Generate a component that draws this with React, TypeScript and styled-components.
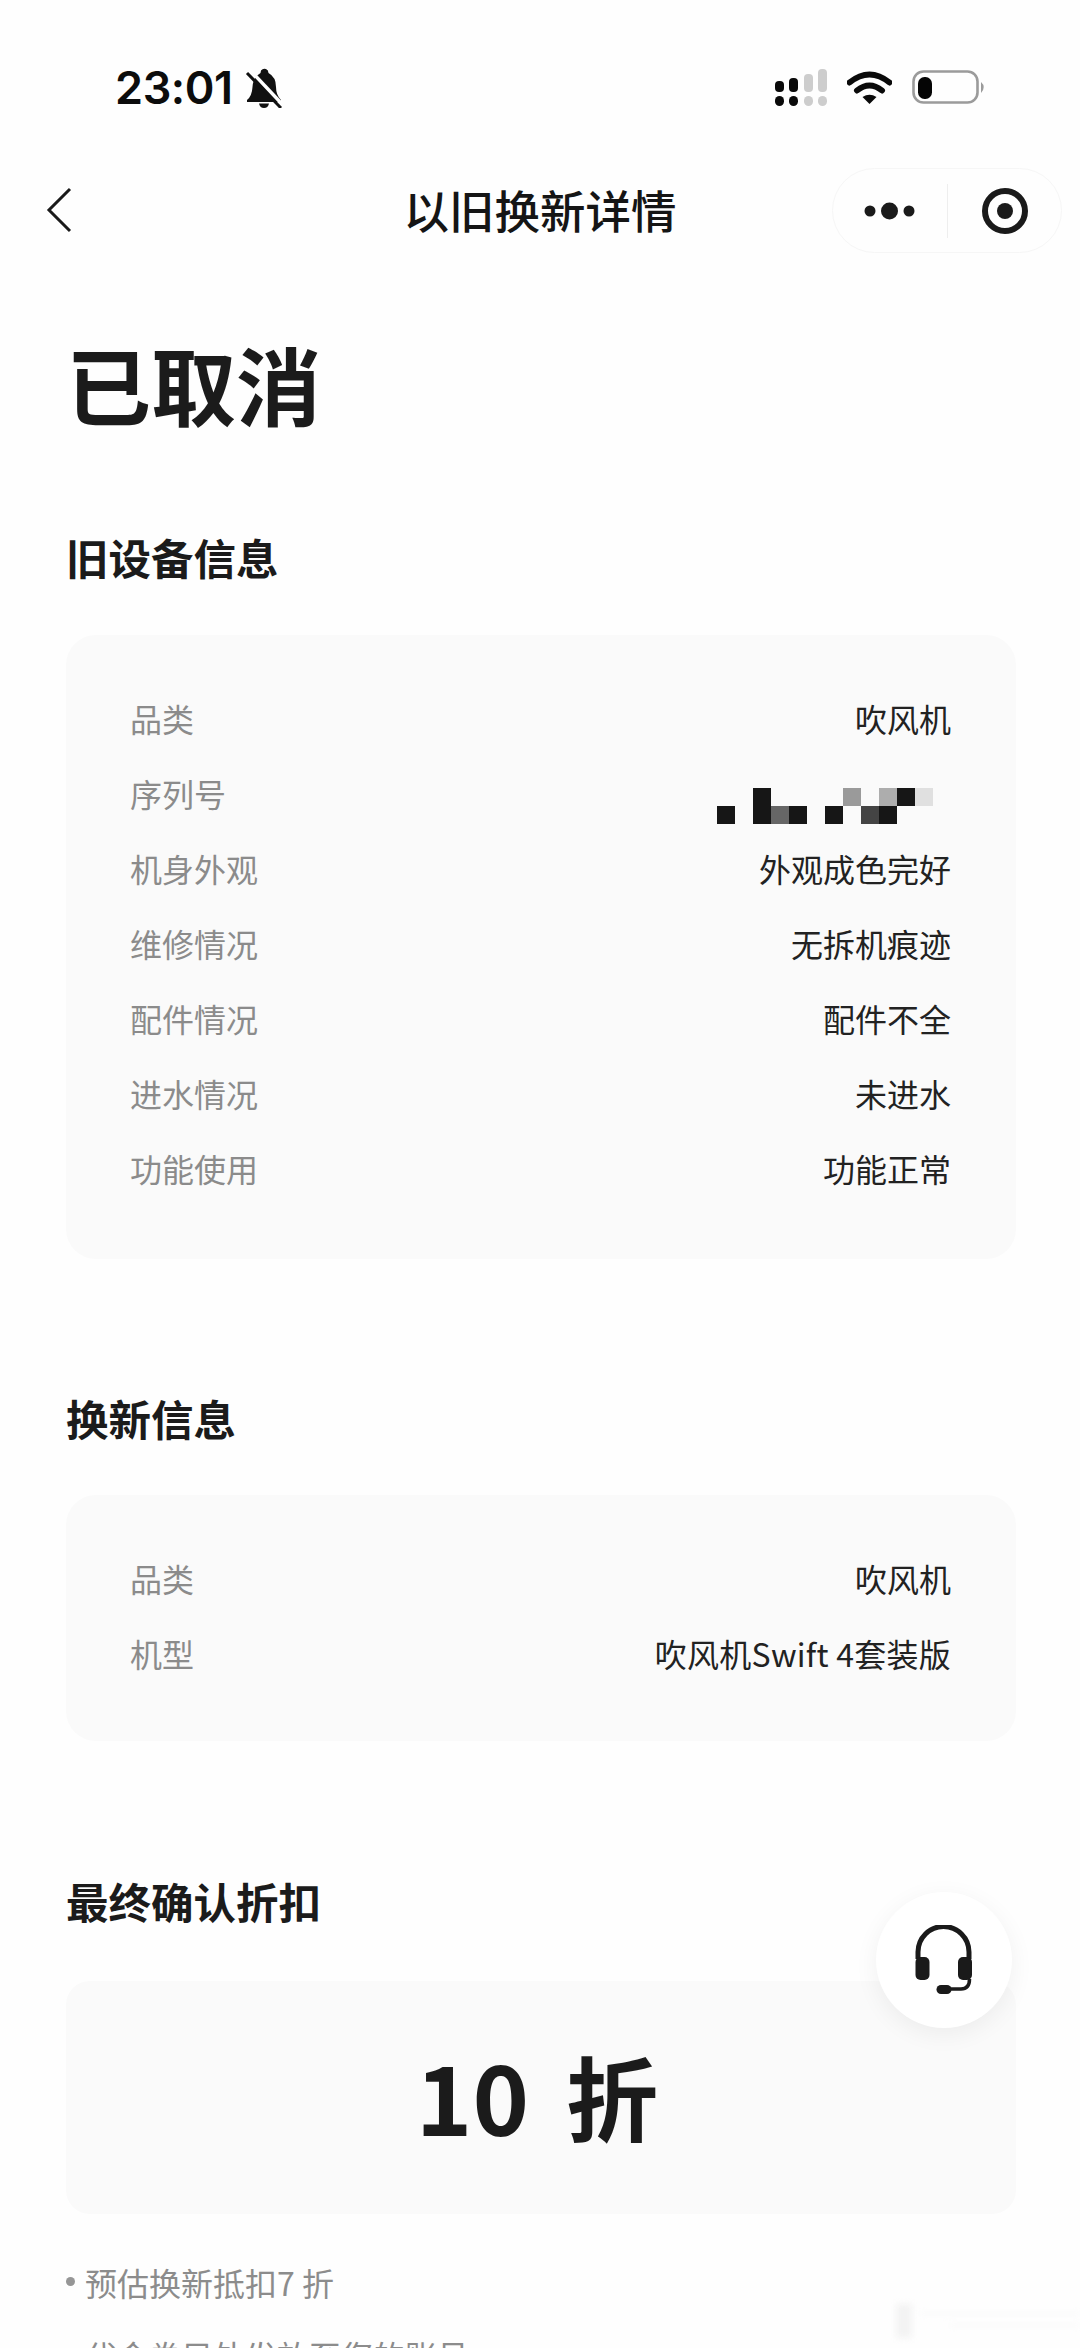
import React from "react";
import styled, { createGlobalStyle } from "styled-components";

const Global = createGlobalStyle`
  html, body { margin: 0; padding: 0; background: #fff; }
  body { font-family: "Noto Sans CJK SC", "Noto Sans", sans-serif; color: #1c1c1c; }
`;

const Page = styled.div`
  position: relative;
  width: 1080px;
  height: 2348px;
  overflow: hidden;
  background: #fefefe;
`;

const StatusBar = styled.div`
  height: 168px;
  box-sizing: border-box;
  padding: 68px 93px 0 115px;
  display: flex;
  align-items: flex-start;
  justify-content: space-between;
`;

const StatusLeft = styled.div`
  display: flex;
  align-items: center;
  gap: 12px;
  height: 40px;
`;

const Time = styled.span`
  font-family: Inter, "Liberation Sans", sans-serif;
  font-weight: 600;
  font-size: 45px;
  line-height: 40px;
  letter-spacing: -0.4px;
  color: #0c0c0c;
`;

const StatusRight = styled.div`
  display: flex;
  align-items: center;
  gap: 20px;
  height: 38px;
`;

const NavBar = styled.div`
  height: 85px;
  position: relative;
  display: flex;
  align-items: center;
  justify-content: center;
`;

const NavTitle = styled.h1`
  margin: 0;
  padding-bottom: 3px;
  font-size: 45.5px;
  font-weight: 500;
  line-height: 60px;
  color: #151515;
`;

const BackIcon = styled.svg`
  position: absolute;
  left: 46px;
  top: 19px;
`;

const Capsule = styled.div`
  position: absolute;
  right: 18px;
  top: 0;
  width: 230px;
  height: 85px;
  box-sizing: border-box;
  border: 1.5px solid #f6f6f6;
  border-radius: 43px;
  display: flex;
  align-items: center;
`;

const CapsuleSide = styled.div<{ $w: number }>`
  width: ${(p) => p.$w}px;
  height: 54px;
  display: flex;
  align-items: center;
  justify-content: center;
`;

const CapsuleLeft = styled(CapsuleSide)`
  border-right: 1.5px solid #eeeeee;
  box-sizing: border-box;
`;

const Content = styled.main`
  padding: 87px 64px 0 66px;
`;

const StateTitle = styled.div`
  font-size: 85px;
  font-weight: 700;
  line-height: 86px;
  color: #1b1b1b;
`;

const SectionTitle = styled.h2<{ $top: number }>`
  margin: ${(p) => p.$top}px 0 0;
  font-size: 42.5px;
  font-weight: 700;
  line-height: 60px;
  color: #1b1b1b;
`;

const Card = styled.section<{ $gap: number; $bottom: number }>`
  margin-top: ${(p) => p.$gap}px;
  padding: 45px 65px ${(p) => p.$bottom}px 64px;
  background: #fafafa;
  border-radius: 30px;
`;

const Row = styled.div`
  height: 75px;
  display: flex;
  align-items: center;
  justify-content: space-between;
  font-size: 32px;
  line-height: 44px;
`;

const Label = styled.span`
  color: #8b8b8b;
`;

const Value = styled.span<{ $spacing?: number }>`
  color: #222;
  letter-spacing: ${(p) => p.$spacing ?? 0}px;
`;

const Mosaic = styled.div`
  display: grid;
  grid-template-columns: repeat(12, 18px);
  grid-auto-rows: 18px;
  margin: 26px 18px 0 0;
`;

const MosaicCell = styled.i<{ $c: string }>`
  display: block;
  background: ${(p) => p.$c};
`;

const DiscountCard = styled.section`
  margin-top: 50px;
  height: 233px;
  box-sizing: border-box;
  padding: 0 8px 6px 0;
  background: #fafafa;
  border-radius: 24px;
  display: flex;
  align-items: center;
  justify-content: center;
  gap: 37px;
  font-weight: 700;
  line-height: 120px;
  color: #1b1b1b;
`;

const DiscountPart = styled.span<{ $size: number }>`
  font-size: ${(p) => p.$size}px;
`;

const Notes = styled.ul`
  list-style: none;
  margin: 31px 0 0;
  padding: 0;
`;

const Note = styled.li`
  display: flex;
  align-items: center;
  height: 73px;
  font-size: 32px;
  color: #8c8c8c;
  white-space: nowrap;
`;

const NoteDot = styled.i`
  width: 9px;
  height: 9px;
  border-radius: 50%;
  margin-right: 10px;
  background: #969696;
`;

const FloatButton = styled.div`
  position: absolute;
  left: 876px;
  top: 1892px;
  width: 136px;
  height: 136px;
  border-radius: 50%;
  background: #fff;
  box-shadow: 0 6px 24px rgba(0, 0, 0, 0.06);
  display: flex;
  align-items: center;
  justify-content: center;
`;

const Watermark = styled.div`
  position: absolute;
  left: 890px;
  top: 2300px;
  width: 190px;
  height: 42px;
  filter: blur(3px);
  background:
    linear-gradient(#f3f3f3, #f3f3f3) 6px 4px / 16px 34px no-repeat,
    linear-gradient(#fafafa, #fafafa) 30px 12px / 160px 3px no-repeat,
    linear-gradient(#fafafa, #fafafa) 60px 24px / 130px 3px no-repeat;
`;

const K = "#161616";
const mosaicCells = [
  ["transparent", "transparent", K, "transparent", "transparent", "transparent", "transparent", "#9a9a9a", "transparent", "#adadad", K, "#e0e0e0"],
  [K, "transparent", K, "#666666", K, "transparent", K, "transparent", "#444444", K, "transparent", "transparent"],
];

const SignalIcon = () => (
  <svg width="52" height="37" viewBox="0 0 52 37">
    <g fill="#0a0a0a">
      <rect x="0" y="12" width="9" height="11" rx="4" />
      <rect x="14" y="9" width="9" height="14" rx="4" />
      <rect x="0" y="27" width="9" height="10" rx="4.5" />
      <rect x="14" y="27" width="9" height="10" rx="4.5" />
    </g>
    <g fill="#cdcdcd">
      <rect x="29" y="5" width="9" height="18" rx="4" />
      <rect x="43" y="0" width="9" height="23" rx="4" />
      <rect x="29" y="27" width="9" height="10" rx="4.5" />
      <rect x="43" y="27" width="9" height="10" rx="4.5" />
    </g>
  </svg>
);

const WifiIcon = () => (
  <svg width="45" height="34" viewBox="0 0 45 34">
    <path d="M2.5 12.5 Q22.5 -3.5 42.5 12.5" fill="none" stroke="#0a0a0a" strokeWidth="6" strokeLinecap="round" />
    <path d="M10 20.5 Q22.5 10.5 35 20.5" fill="none" stroke="#0a0a0a" strokeWidth="6" strokeLinecap="round" />
    <path d="M15.5 27 Q22.5 22.5 29.5 27 L22.5 34 Z" fill="#0a0a0a" />
  </svg>
);

const BatteryIcon = () => (
  <svg width="75" height="34" viewBox="0 0 75 34">
    <rect x="1.5" y="1.5" width="64" height="31" rx="10" fill="none" stroke="#9b9b9b" strokeWidth="2.6" />
    <rect x="6" y="7" width="14" height="22" rx="6.5" fill="#050505" />
    <path d="M69 12 Q74.5 17 69 23 Z" fill="#9b9b9b" />
  </svg>
);

const BellSlashIcon = () => (
  <svg width="37" height="40" viewBox="0 0 37 40">
    <path
      d="M16 2.5 Q18 0 21 1 Q23.5 2 23.5 5 Q31 9 31 19 Q31 27 36 32 L36 34 L2 34 L2 32 Q7 28 7.5 19 Q8 9 15.5 5 Z"
      fill="#111"
    />
    <path d="M14 35.5 H24 Q23 40 19 40 Q15 40 14 35.5 Z" fill="#111" />
    <path d="M5 2 L37 36" stroke="#fff" strokeWidth="3.5" />
    <path d="M2 5 L36 40" stroke="#111" strokeWidth="3" />
  </svg>
);

const ChevronIcon = () => (
  <BackIcon width="26" height="46" viewBox="0 0 26 46">
    <path d="M24 2 L3 23 L24 44" fill="none" stroke="#1a1a1a" strokeWidth="3" />
  </BackIcon>
);

const MoreIcon = () => (
  <svg width="52" height="20" viewBox="0 0 52 20">
    <circle cx="6" cy="10" r="5.5" fill="#1a1a1a" />
    <circle cx="25.5" cy="10" r="8.5" fill="#1a1a1a" />
    <circle cx="45" cy="10" r="5.5" fill="#1a1a1a" />
  </svg>
);

const TargetIcon = () => (
  <svg width="46" height="46" viewBox="0 0 46 46">
    <circle cx="23" cy="23" r="20" fill="none" stroke="#1a1a1a" strokeWidth="6" />
    <circle cx="23" cy="23" r="8" fill="#1a1a1a" />
  </svg>
);

const HeadsetIcon = () => (
  <svg width="58" height="70" viewBox="0 0 58 70">
    <path d="M3 34 V27 A25.5 25.5 0 0 1 54 27 V34" fill="none" stroke="#1a1a1a" strokeWidth="5" />
    <rect x="0.5" y="32" width="14" height="23" rx="5" fill="#1a1a1a" />
    <rect x="43" y="32" width="14" height="23" rx="5" fill="#1a1a1a" />
    <path d="M54.5 54 Q54.5 64 46 64 H32" fill="none" stroke="#1a1a1a" strokeWidth="3.5" />
    <rect x="21.5" y="60" width="15" height="9" rx="4.5" fill="#1a1a1a" />
  </svg>
);

const oldDevice = [
  ["品类", "吹风机"],
  ["序列号", null],
  ["机身外观", "外观成色完好"],
  ["维修情况", "无拆机痕迹"],
  ["配件情况", "配件不全"],
  ["进水情况", "未进水"],
  ["功能使用", "功能正常"],
];

export default function App() {
  return (
    <Page>
      <Global />
      <StatusBar>
        <StatusLeft>
          <Time>23:01</Time>
          <BellSlashIcon />
        </StatusLeft>
        <StatusRight>
          <SignalIcon />
          <WifiIcon />
          <BatteryIcon />
        </StatusRight>
      </StatusBar>
      <NavBar>
        <ChevronIcon />
        <NavTitle>以旧换新详情</NavTitle>
        <Capsule>
          <CapsuleLeft $w={115}>
            <MoreIcon />
          </CapsuleLeft>
          <CapsuleSide $w={113}>
            <TargetIcon />
          </CapsuleSide>
        </Capsule>
      </NavBar>
      <Content>
        <StateTitle>已取消</StateTitle>
        <SectionTitle $top={101}>旧设备信息</SectionTitle>
        <Card $gap={48} $bottom={54}>
          {oldDevice.map(([label, value]) => (
            <Row key={label}>
              <Label>{label}</Label>
              {value ? (
                <Value>{value}</Value>
              ) : (
                <Mosaic>
                  {mosaicCells.flat().map((c, i) => (
                    <MosaicCell key={i} $c={c} />
                  ))}
                </Mosaic>
              )}
            </Row>
          ))}
        </Card>
        <SectionTitle $top={129}>换新信息</SectionTitle>
        <Card $gap={47} $bottom={51}>
          <Row>
            <Label>品类</Label>
            <Value>吹风机</Value>
          </Row>
          <Row>
            <Label>机型</Label>
            <Value $spacing={0.25}>吹风机Swift 4套装版</Value>
          </Row>
        </Card>
        <SectionTitle $top={130}>最终确认折扣</SectionTitle>
        <DiscountCard>
          <DiscountPart $size={96}>10</DiscountPart>
          <DiscountPart $size={92}>折</DiscountPart>
        </DiscountCard>
        <Notes>
          <Note>
            <NoteDot />
            预估换新抵扣7 折
          </Note>
          <Note>
            <NoteDot />
            代金券另外发放至您的账号
          </Note>
        </Notes>
      </Content>
      <FloatButton>
        <HeadsetIcon />
      </FloatButton>
      <Watermark />
    </Page>
  );
}
